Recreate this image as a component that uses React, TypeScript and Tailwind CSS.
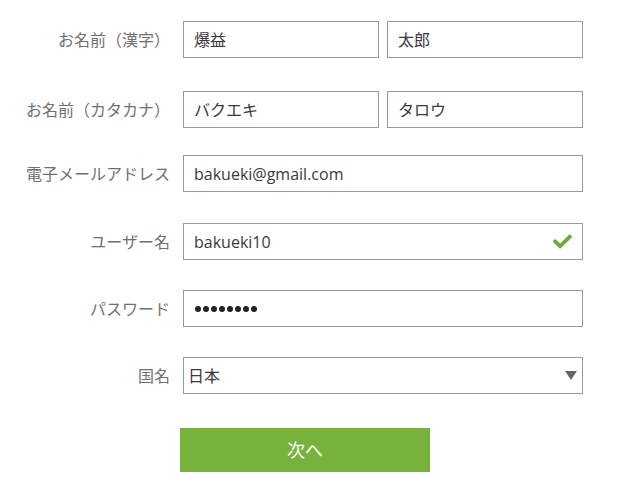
import { FaCheck } from 'react-icons/fa';

const jp = "font-['Open_Sans','Noto_Sans_CJK_JP',sans-serif]";

function Label({ children }: { children: string }) {
  return (
    <div className="w-[171px] shrink-0 pr-[1px] text-right text-[16px] leading-none text-[#707070] whitespace-nowrap">
      {children}
    </div>
  );
}

function Box({ value, className = '' }: { value: string; className?: string }) {
  return (
    <div className={`h-[37px] border border-[#999] bg-white pl-[10px] flex items-center text-[16px] text-[#3a3a3a] ${className}`}>
      {value}
    </div>
  );
}

export default function App() {
  return (
    <div className={`w-[640px] h-[490px] bg-white overflow-hidden ${jp}`}>
      <div className="flex flex-col">
        {/* name (kanji) */}
        <div className="mt-[21px] flex items-center gap-[12px]">
          <Label>お名前（漢字）</Label>
          <div className="flex gap-[8px]">
            <Box value="爆益" className="w-[196px]" />
            <Box value="太郎" className="w-[196px]" />
          </div>
        </div>

        {/* name (katakana) */}
        <div className="mt-[33px] flex items-center gap-[12px]">
          <Label>お名前（カタカナ）</Label>
          <div className="flex gap-[8px]">
            <Box value="バクエキ" className="w-[196px]" />
            <Box value="タロウ" className="w-[196px]" />
          </div>
        </div>

        <div className="mt-[27px] flex items-center gap-[12px]">
          <Label>電子メールアドレス</Label>
          <Box value="bakueki@gmail.com" className="w-[400px]" />
        </div>

        <div className="mt-[31px] flex items-center gap-[12px]">
          <Label>ユーザー名</Label>
          <div className="w-[400px] h-[37px] border border-[#999] pl-[10px] pr-[9px] flex items-center justify-between text-[16px] text-[#3a3a3a]">
            <span>bakueki10</span>
            <FaCheck className="text-[#6cab3a] w-[21px] h-[19px]" />
          </div>
        </div>

        <div className="mt-[30px] flex items-center gap-[12px]">
          <Label>パスワード</Label>
          <div className="w-[400px] h-[37px] border border-[#999] pl-[11px] flex items-center gap-[2px]">
            {[0, 1, 2, 3, 4, 5, 6, 7].map((i) => (
              <span key={i} className="w-[6px] h-[6px] rounded-full bg-[#222]" />
            ))}
          </div>
        </div>

        <div className="mt-[30px] flex items-center gap-[12px]">
          <Label>国名</Label>
          <div className="w-[400px] h-[37px] border border-[#999] pl-[4px] pr-[4px] flex items-center justify-between text-[16px] text-[#3a3a3a]">
            <span>日本</span>
            <svg width="12" height="9" viewBox="0 0 12 9" className="mr-[1px]">
              <path d="M0 0 L12 0 L6 9 Z" fill="#666" />
            </svg>
          </div>
        </div>

        <div className="mt-[34px] pl-[180px]">
          <button className="w-[250px] h-[44px] bg-[#77b23c] text-white text-[18px] flex items-center justify-center">
            次へ
          </button>
        </div>
      </div>
    </div>
  );
}
